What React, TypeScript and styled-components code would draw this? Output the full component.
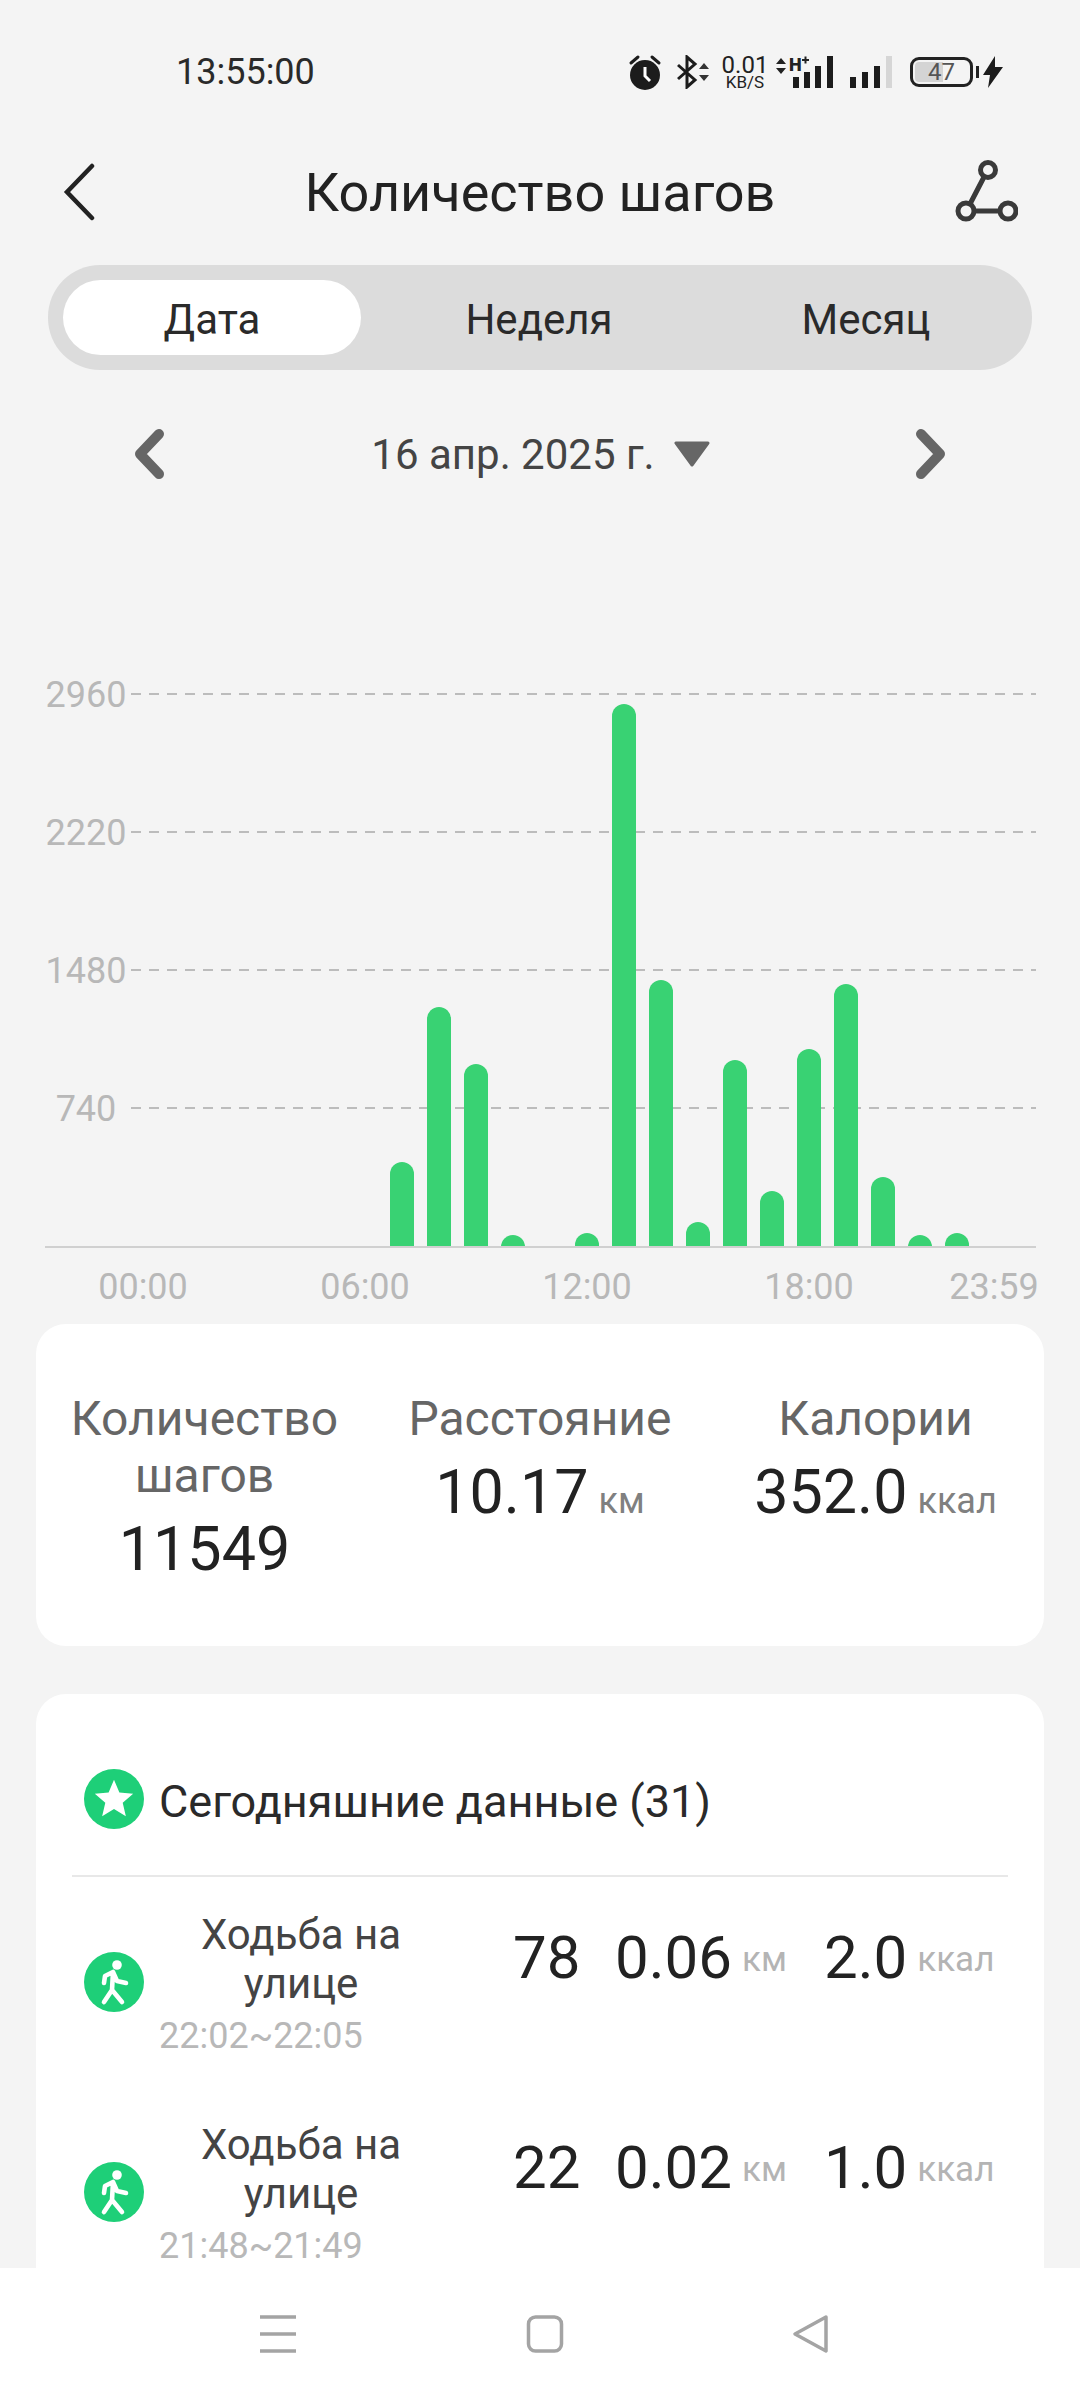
import React from 'react';
import styled, { createGlobalStyle } from 'styled-components';
import { MdStar } from 'react-icons/md';

const GlobalStyle = createGlobalStyle`
  html, body {
    margin: 0;
    padding: 0;
    background: #f4f4f4;
  }
  * {
    box-sizing: border-box;
  }
`;

const Screen = styled.div`
  width: 1080px;
  height: 2400px;
  display: flex;
  flex-direction: column;
  overflow: hidden;
  background: #f4f4f4;
  color: #222;
  font-family: Roboto, "Noto Sans", sans-serif;
`;

const Content = styled.main`
  flex: 1;
  min-height: 0;
  overflow: hidden;
`;

const StatusBar = styled.div`
  height: 144px;
  display: flex;
  align-items: center;
  justify-content: space-between;
  padding: 0 77px 0 176px;
`;

const Clock = styled.span`
  font-size: 36px;
  color: #2a2a2a;
`;

const StatusIcons = styled.div`
  display: flex;
  align-items: center;
`;

const NetSpeed = styled.div`
  display: flex;
  flex-direction: column;
  align-items: center;
  width: 48px;
  margin: 0 7px 0 11px;
  color: #222;
  font-size: 24px;
  line-height: 20px;

  small {
    font-size: 17px;
    line-height: 15px;
    white-space: nowrap;
  }
`;

const Battery = styled.div`
  position: relative;
  width: 63px;
  height: 30px;
  margin: 0 10px 0 16px;
  border: 3px solid #222;
  border-radius: 9px;
  display: flex;
  align-items: center;
  justify-content: center;
  font-size: 24px;
  color: #555;
  background: linear-gradient(to right, #d4d4d4 52%, transparent 52%);
  background-clip: content-box;
  padding: 2px;

  &::after {
    content: '';
    position: absolute;
    right: -9px;
    top: 6px;
    width: 3px;
    height: 12px;
    background: #222;
  }
`;

const Header = styled.header`
  height: 96px;
  display: flex;
  align-items: center;
  justify-content: space-between;
  padding: 0 62px 0 62px;
`;

const Title = styled.h1`
  margin: 0 0 0 28px;
  font-size: 54px;
  font-weight: 400;
  color: #222;
`;

const Segment = styled.div`
  margin: 25px 48px 0;
  height: 105px;
  padding: 15px;
  display: grid;
  grid-template-columns: repeat(3, 298px);
  gap: 29px;
  border-radius: 52px;
  background: #dcdcdc;
`;

const SegmentTab = styled.div<{ $active?: boolean }>`
  display: flex;
  align-items: center;
  justify-content: center;
  padding-top: 4px;
  font-size: 42px;
  color: #2a2a2a;
  border-radius: 38px;
  background: ${({ $active }) => ($active ? '#fff' : 'transparent')};
`;

const DateRow = styled.div`
  margin-top: 32px;
  height: 104px;
  display: flex;
  align-items: center;
  justify-content: space-between;
  padding: 0 132px;
`;

const DateLabel = styled.div`
  display: flex;
  align-items: center;
  gap: 18px;
  margin-left: 2px;
  font-size: 42px;
  color: #444;
`;

const ChartSvg = styled.svg`
  display: block;
  width: 1080px;
  height: 818px;

  text {
    font-family: Roboto, "Noto Sans", sans-serif;
    font-size: 36px;
    fill: #b8b8b8;
  }
`;

const Card = styled.section`
  margin: 0 36px;
  background: #fff;
  border-radius: 30px;
`;

const StatsCard = styled(Card)`
  height: 322px;
  display: grid;
  grid-template-columns: 337px 334px 337px;
  padding-top: 66px;
  text-align: center;
`;

const StatLabel = styled.div`
  font-size: 48px;
  line-height: 57px;
  color: #666;
`;

const StatValue = styled.div`
  margin-top: 10px;
  font-size: 61px;
  line-height: 70px;
  color: #222;
  white-space: nowrap;
`;

const Unit = styled.span<{ $size?: number }>`
  font-size: ${({ $size }) => $size ?? 36}px;
  color: ${({ $size }) => ($size ? '#b4b4b4' : '#808080')};
  margin-left: 10px;
  vertical-align: ${({ $size }) => ($size ? '7px' : 'baseline')};
`;

const HistoryCard = styled(Card)`
  margin-top: 48px;
  padding: 60px 36px 0;
`;

const HistoryHeader = styled.div`
  height: 90px;
  display: flex;
  align-items: center;
  gap: 15px;
  padding-left: 12px;
  font-size: 45px;
  color: #2a2a2a;

  span {
    padding-top: 4px;
  }
`;

const Divider = styled.hr`
  margin: 31px 0 0;
  border: 0;
  height: 2px;
  background: #e8e8e8;
`;

const Badge = styled.div`
  flex: none;
  width: 60px;
  height: 60px;
  border-radius: 50%;
  display: flex;
  align-items: center;
  justify-content: center;
  color: #fff;
  background: #1ecf78;
`;

const WorkoutRow = styled.div`
  height: 210px;
  display: flex;
  align-items: center;
  padding-left: 12px;
`;

const WorkoutInfo = styled.div`
  width: 282px;
  margin-left: 16px;
  padding-top: 6px;
  flex: none;
`;

const WorkoutName = styled.div`
  font-size: 42px;
  line-height: 49px;
  text-align: center;
  color: #444;
`;

const WorkoutTime = styled.div`
  margin-top: 4px;
  margin-left: -1px;
  font-size: 36px;
  line-height: 49px;
  color: #b8b8b8;
`;

const WorkoutValues = styled.div`
  margin: 0 0 50px 71px;
  display: grid;
  grid-template-columns: 102px 209px auto;
  align-items: baseline;
  font-size: 60px;
  color: #222;
  white-space: nowrap;
`;

const NavBar = styled.nav`
  flex: none;
  height: 132px;
  background: #fff;
  display: flex;
  align-items: center;
  gap: 228px;
  padding-left: 258px;
`;

const bars = [
  { x: 390, top: 1162 },
  { x: 427, top: 1007 },
  { x: 464, top: 1064 },
  { x: 501, top: 1235 },
  { x: 575, top: 1233 },
  { x: 612, top: 704 },
  { x: 649, top: 980 },
  { x: 686, top: 1222 },
  { x: 723, top: 1060 },
  { x: 760, top: 1191 },
  { x: 797, top: 1049 },
  { x: 834, top: 984 },
  { x: 871, top: 1177 },
  { x: 908, top: 1235 },
  { x: 945, top: 1233 },
];

const CHART_Y = 506;
const BASE = 1247 - CHART_Y;

const gridLines = [
  { label: '2960', y: 694 - CHART_Y },
  { label: '2220', y: 832 - CHART_Y },
  { label: '1480', y: 970 - CHART_Y },
  { label: '740', y: 1108 - CHART_Y },
];

const timeLabels = [
  { label: '00:00', x: 143 },
  { label: '06:00', x: 365 },
  { label: '12:00', x: 587 },
  { label: '18:00', x: 809 },
  { label: '23:59', x: 994 },
];

const workouts = [
  { time: '22:02~22:05', steps: '78', km: '0.06', kcal: '2.0' },
  { time: '21:48~21:49', steps: '22', km: '0.02', kcal: '1.0' },
];

const Chart: React.FC = () => (
  <ChartSvg viewBox="0 0 1080 818">
    {gridLines.map((g) => (
      <g key={g.label}>
        <line x1="131" x2="1036" y1={g.y} y2={g.y} stroke="#bcbcbc" strokeWidth="2" strokeDasharray="10 8" />
        <text x="86" y={g.y + 13} textAnchor="middle">{g.label}</text>
      </g>
    ))}
    {bars.map((b) => {
      const h = BASE - (b.top - CHART_Y);
      return <path key={b.x} d={`M${b.x} ${BASE}V${BASE - h + 12}a12 12 0 0 1 24 0V${BASE}Z`} fill="#39d273" />;
    })}
    <line x1="45" x2="1036" y1={BASE} y2={BASE} stroke="#d0d0d0" strokeWidth="2" />
    {timeLabels.map((t) => (
      <text key={t.label} x={t.x} y={BASE + 52} textAnchor="middle">{t.label}</text>
    ))}
  </ChartSvg>
);

const WalkIcon: React.FC = () => (
  <svg width="60" height="60" viewBox="0 0 60 60">
    <circle cx="33" cy="13" r="4.800" fill="#fff" />
    <path
      d="M20 31l1-7 8-4 4 9 9 2M29 20l-1 18-8 12M28 38l10 12"
      stroke="#fff"
      strokeWidth="4.600"
      fill="none"
      strokeLinecap="round"
      strokeLinejoin="round"
    />
  </svg>
);

const App: React.FC = () => (
  <Screen>
    <GlobalStyle />
    <Content>
      <StatusBar>
        <Clock>13:55:00</Clock>
        <StatusIcons>
          <svg width="34" height="36" viewBox="0 0 34 36">
            <circle cx="17" cy="21" r="15" fill="#1c1c1c" />
            <path d="M17 13v9l5 5" stroke="#fff" strokeWidth="3" fill="none" />
            <path d="M3 9l7-6M31 9l-7-6" stroke="#1c1c1c" strokeWidth="3" strokeLinecap="round" />
          </svg>
          <svg width="34" height="34" viewBox="0 0 34 34" style={{ marginLeft: 14 }}>
            <path d="M2 10l17 15-8 7V2l8 7L2 24" stroke="#1c1c1c" strokeWidth="3" fill="none" />
            <path d="M23 14l5-6 5 6zM23 20l5 6 5-6z" fill="#333" />
          </svg>
          <NetSpeed>
            0.01
            <small>KB/S</small>
          </NetSpeed>
          <svg width="62" height="34" viewBox="0 0 62 34">
            <path d="M0 9l5-6 5 6zM0 13l5 6 5-6z" fill="#222" />
            <text x="13" y="16" fontFamily="Roboto, sans-serif" fontSize="18" fontWeight="900" fill="#222">H</text>
            <path d="M26 5h7M29.500 1.500v7" stroke="#222" strokeWidth="2" />
            <path d="M17 22h6v11h-6zM28 17h6v16h-6zM39 11h6v22h-6zM51 1h6v32h-6z" fill="#1c1c1c" />
          </svg>
          <svg width="44" height="34" viewBox="0 0 44 34" style={{ marginLeft: 12 }}>
            <path d="M0 22h6v11H0zM12 17h6v16h-6zM24 11h6v22h-6z" fill="#1c1c1c" />
            <path d="M36 1h6v32h-6z" fill="#d6d6d6" />
          </svg>
          <Battery>47</Battery>
          <svg width="20" height="32" viewBox="0 0 20 32">
            <path d="M12 0L0 19h7L5 32l15-21h-8z" fill="#1c1c1c" />
          </svg>
        </StatusIcons>
      </StatusBar>

      <Header>
        <svg width="36" height="58" viewBox="0 0 36 58">
          <path d="M30 3L5 29l25 26" stroke="#222" strokeWidth="4.500" fill="none" strokeLinecap="round" />
        </svg>
        <Title>Количество шагов</Title>
        <svg width="64" height="64" viewBox="0 0 64 64" style={{ marginTop: -2 }}>
          <g stroke="#3a3a3a" strokeWidth="5" fill="none">
            <circle cx="34" cy="11" r="7.500" />
            <circle cx="12" cy="52" r="8" />
            <circle cx="54" cy="52" r="8" />
            <path d="M30 18L16 45M20 52h26" />
          </g>
        </svg>
      </Header>

      <Segment>
        <SegmentTab $active>Дата</SegmentTab>
        <SegmentTab>Неделя</SegmentTab>
        <SegmentTab>Месяц</SegmentTab>
      </Segment>

      <DateRow>
        <svg width="34" height="50" viewBox="0 0 34 50">
          <path d="M27 5L8 25l19 20" stroke="#666" strokeWidth="10" fill="none" strokeLinecap="round" strokeLinejoin="round" />
        </svg>
        <DateLabel>
          16 апр. 2025 г.
          <svg width="38" height="26" viewBox="0 0 38 26">
            <path d="M3 2h32L19 24z" fill="#666" stroke="#666" strokeWidth="3" strokeLinejoin="round" />
          </svg>
        </DateLabel>
        <svg width="34" height="50" viewBox="0 0 34 50">
          <path d="M7 5l19 20L7 45" stroke="#666" strokeWidth="10" fill="none" strokeLinecap="round" strokeLinejoin="round" />
        </svg>
      </DateRow>

      <Chart />

      <StatsCard>
        <div>
          <StatLabel>Количество шагов</StatLabel>
          <StatValue>11549</StatValue>
        </div>
        <div>
          <StatLabel>Расстояние</StatLabel>
          <StatValue>10.17<Unit>км</Unit></StatValue>
        </div>
        <div>
          <StatLabel>Калории</StatLabel>
          <StatValue>352.0<Unit>ккал</Unit></StatValue>
        </div>
      </StatsCard>

      <HistoryCard>
        <HistoryHeader>
          <Badge><MdStar size={46} /></Badge>
          <span>Сегодняшние данные (31)</span>
        </HistoryHeader>
        <Divider />
        {workouts.map((w) => (
          <WorkoutRow key={w.time}>
            <Badge><WalkIcon /></Badge>
            <WorkoutInfo>
              <WorkoutName>Ходьба на улице</WorkoutName>
              <WorkoutTime>{w.time}</WorkoutTime>
            </WorkoutInfo>
            <WorkoutValues>
              <span>{w.steps}</span>
              <span>{w.km}<Unit $size={35}>км</Unit></span>
              <span>{w.kcal}<Unit $size={35}>ккал</Unit></span>
            </WorkoutValues>
          </WorkoutRow>
        ))}
      </HistoryCard>
    </Content>

    <NavBar>
      <svg width="40" height="38" viewBox="0 0 40 38">
        <path d="M2 2h36M2 19h36M2 36h36" stroke="#a4a4a4" strokeWidth="3.500" />
      </svg>
      <svg width="38" height="38" viewBox="0 0 38 38">
        <rect x="2.500" y="2" width="33" height="34" rx="7" fill="none" stroke="#a4a4a4" strokeWidth="3.500" />
      </svg>
      <svg width="38" height="40" viewBox="0 0 38 40">
        <path d="M34 3L3 20l31 17z" fill="none" stroke="#a4a4a4" strokeWidth="3.500" strokeLinejoin="round" />
      </svg>
    </NavBar>
  </Screen>
);

export default App;
